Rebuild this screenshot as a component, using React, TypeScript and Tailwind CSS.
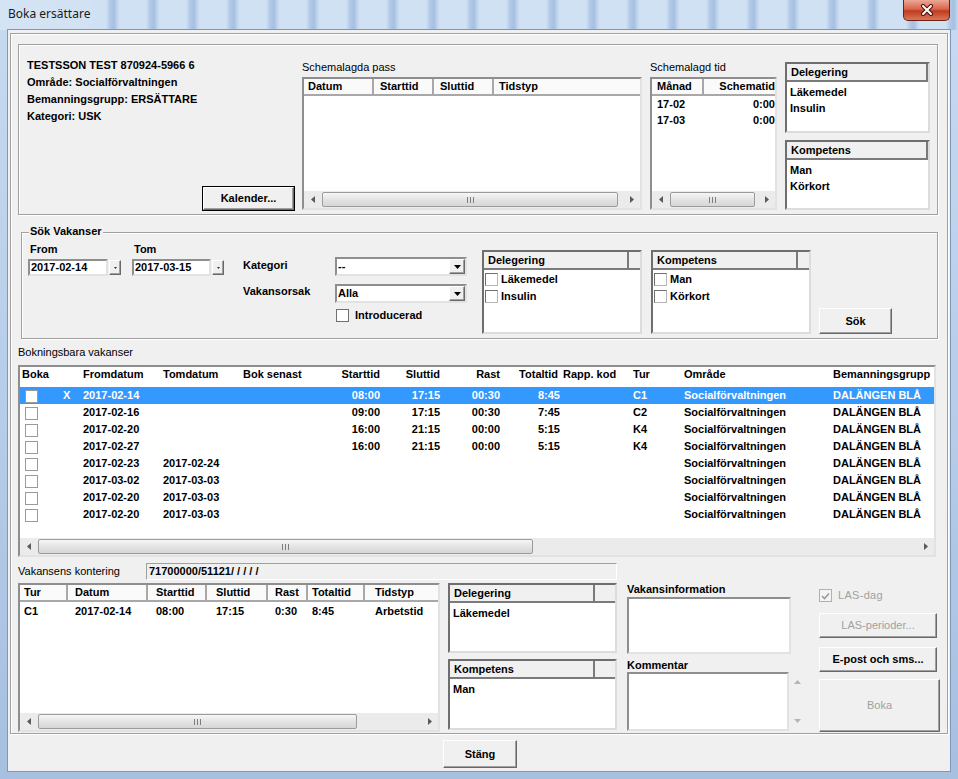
import React from 'react';

const sunken =
  'border-2 border-t-[#8e8e8e] border-l-[#8e8e8e] border-r-[#e2e2e2] border-b-[#e2e2e2]';
const etched = 'border border-[#a0a0a0] shadow-[inset_1px_1px_0_#fff,1px_1px_0_#fff]';
const raised =
  'bg-[#f0f0f0] border border-t-[#ffffff] border-l-[#ffffff] border-r-[#696969] border-b-[#696969] shadow-[inset_-1px_-1px_0_#a0a0a0]';

type Dir = 'left' | 'right' | 'up' | 'down';

function Arrow({ dir, color = '#5a5a5a' }: { dir: Dir; color?: string }) {
  const horiz = dir === 'left' || dir === 'right';
  const pts = {
    left: '4,0 4,7 0,3.5',
    right: '0,0 0,7 4,3.5',
    up: '0,4 7,4 3.5,0',
    down: '0,0 7,0 3.5,4',
  }[dir];
  return (
    <svg width={horiz ? 4 : 7} height={horiz ? 7 : 4} viewBox={horiz ? '0 0 4 7' : '0 0 7 4'}>
      <polygon points={pts} fill={color} />
    </svg>
  );
}

function Grip() {
  return (
    <div className="flex gap-[2px]">
      <span className="w-[1px] h-[6px] bg-[#7d7d7d]" />
      <span className="w-[1px] h-[6px] bg-[#7d7d7d]" />
      <span className="w-[1px] h-[6px] bg-[#7d7d7d]" />
    </div>
  );
}

function HScroll({ thumb }: { thumb: string }) {
  return (
    <div className="h-[17px] flex bg-[#ebebeb] shrink-0">
      <div className="w-[17px] flex items-center justify-center">
        <Arrow dir="left" />
      </div>
      <div className="flex-1 flex">
        <div
          className={`${thumb} my-[1px] rounded-[2px] border border-[#9b9b9b] bg-[linear-gradient(to_bottom,#f6f6f6,#e4e4e4_50%,#d6d6d6)] flex items-center justify-center`}
        >
          <Grip />
        </div>
      </div>
      <div className="w-[17px] flex items-center justify-center">
        <Arrow dir="right" />
      </div>
    </div>
  );
}

function Check({ className = '' }: { className?: string }) {
  return <span className={`block w-[13px] h-[13px] border border-[#9a9a9a] bg-white ${className}`} />;
}

function SearchCheck() {
  return (
    <span className="block w-[13px] h-[13px] border border-[#6f6f6f] border-r-[#b5b5b5] border-b-[#b5b5b5] bg-white" />
  );
}

function HeaderedList({
  title,
  cell,
  items,
  checks = false,
  className,
}: {
  title: string;
  cell: string;
  items: string[];
  checks?: boolean;
  className: string;
}) {
  return (
    <div
      className={`${className} border-2 border-t-[#6e6e6e] border-l-[#6e6e6e] border-r-[#dcdcdc] border-b-[#dcdcdc] bg-white flex flex-col overflow-hidden`}
    >
      <div className="h-[18px] shrink-0 flex bg-[#f0f0f0] border-b-2 border-[#7a7a7a]">
        <div className={`${cell} border-r-2 border-[#7a7a7a] pl-[4px] leading-[16px] whitespace-nowrap`}>
          {title}
        </div>
      </div>
      <div className={checks ? 'pt-[1px]' : 'pt-[2px]'}>
        {items.map((it) =>
          checks ? (
            <div key={it} className="h-[17px] flex items-center pl-[1px]">
              <SearchCheck />
              <span className="ml-[3px] leading-[17px]">{it}</span>
            </div>
          ) : (
            <div key={it} className="pl-[3px] leading-[16px]">
              {it}
            </div>
          )
        )}
      </div>
    </div>
  );
}

function ClassicButton({
  label,
  className,
  disabled = false,
  isDefault = false,
}: {
  label: string;
  className: string;
  disabled?: boolean;
  isDefault?: boolean;
}) {
  const inner = (
    <div
      className={`${raised} w-full h-full flex items-center justify-center ${
        disabled ? 'text-[#a0a0a0] font-normal' : 'text-black'
      }`}
    >
      {label}
    </div>
  );
  return isDefault ? (
    <div className={`${className} border border-black`}>{inner}</div>
  ) : (
    <div className={className}>{inner}</div>
  );
}

function TitleBar() {
  return (
    <div className="h-[30px] shrink-0 flex bg-[linear-gradient(90deg,#d5e4f4_0,#d2e2f3_90px,transparent_96px),repeating-linear-gradient(90deg,#d0e1f3_0,#d0e1f3_26px,#b2c9e5_30px,#a6bfe0_34px,#c6d9ef_38px,#d0e1f3_40px)]">
      <div className="pl-[8px] pt-[6px] text-[12px] leading-[16px] font-normal font-['Noto_Sans',sans-serif] text-[#1a1a1a]">
        Boka ersättare
      </div>
      <div className="ml-auto mr-[8px] w-[47px] h-[21px] rounded-b-[5px] border border-t-0 border-[#6b2013] bg-[linear-gradient(to_bottom,#eaa896,#d8664b_45%,#c13a20_55%,#d77758)] flex items-center justify-center">
        <svg width="14" height="12" viewBox="0 0 14 12">
          <path d="M3 2 L11 10 M11 2 L3 10" stroke="#4a1208" strokeWidth="4" strokeLinecap="round" />
          <path d="M3 2 L11 10 M11 2 L3 10" stroke="#ffffff" strokeWidth="2" strokeLinecap="round" />
        </svg>
      </div>
    </div>
  );
}

function TopGroup() {
  return (
    <div className={`ml-[7px] mt-[10px] w-[920px] h-[171px] shrink-0 ${etched} flex items-start`}>
      <div className="ml-[8px] mt-[12px] w-[275px] flex flex-col">
        <div className="leading-[17px]">TESTSSON TEST 870924-5966 6</div>
        <div className="leading-[17px]">Område: Socialförvaltningen</div>
        <div className="leading-[17px]">Bemanningsgrupp: ERSÄTTARE</div>
        <div className="leading-[17px]">Kategori: USK</div>
        <ClassicButton label="Kalender..." isDefault className="mt-[61px] ml-[175px] w-[93px] h-[25px]" />
      </div>

      <div className="mt-[15px] w-[340px] flex flex-col">
        <div className="leading-[15px] font-normal">Schemalagda pass</div>
        <div className={`mt-[2px] h-[133px] ${sunken} bg-white flex flex-col`}>
          <div className="h-[17px] flex bg-[#fafafa] border-b-2 border-[#a8a8a8] leading-[15px]">
            <div className="w-[70px] pl-[4px] border-r-2 border-[#a8a8a8]">Datum</div>
            <div className="w-[60px] pl-[6px] border-r-2 border-[#a8a8a8]">Starttid</div>
            <div className="w-[60px] pl-[6px] border-r-2 border-[#a8a8a8]">Sluttid</div>
            <div className="flex-1 pl-[5px]">Tidstyp</div>
          </div>
          <div className="flex-1" />
          <HScroll thumb="ml-[1px] w-[296px]" />
        </div>
      </div>

      <div className="ml-[8px] mt-[15px] w-[127px] flex flex-col">
        <div className="leading-[15px] font-normal">Schemalagd tid</div>
        <div className={`mt-[2px] h-[133px] ${sunken} bg-white flex flex-col overflow-hidden`}>
          <div className="h-[17px] flex bg-[#fafafa] border-b-2 border-[#a8a8a8] leading-[15px] whitespace-nowrap">
            <div className="w-[52px] shrink-0 pl-[5px] border-r-2 border-[#a8a8a8]">Månad</div>
            <div className="flex-1 text-right">Schematid</div>
          </div>
          <div className="flex-1">
            {['17-02', '17-03'].map((m) => (
              <div key={m} className="flex leading-[16px]">
                <div className="w-[52px] pl-[5px]">{m}</div>
                <div className="flex-1 text-right">0:00</div>
              </div>
            ))}
          </div>
          <HScroll thumb="ml-[1px] w-[85px]" />
        </div>
      </div>

      <div className="ml-[8px] mt-[17px] w-[145px] flex flex-col">
        <HeaderedList title="Delegering" cell="w-full" items={['Läkemedel', 'Insulin']} className="h-[71px]" />
        <HeaderedList title="Kompetens" cell="w-full" items={['Man', 'Körkort']} className="mt-[7px] h-[70px]" />
      </div>
    </div>
  );
}

function DateField({ value, w }: { value: string; w: string }) {
  return (
    <div className="flex items-start">
      <div className={`${w} h-[17px] ${sunken} bg-white pl-[1px] leading-[13px]`}>{value}</div>
      <div className={`ml-[1px] mt-[1px] w-[12px] h-[15px] ${raised} flex items-center justify-center`}>
        <svg width="3" height="2" viewBox="0 0 3 2">
          <polygon points="0,0 3,0 1.5,2" fill="#333" />
        </svg>
      </div>
    </div>
  );
}

function Select({ value, className }: { value: string; className: string }) {
  return (
    <div className={`${className} h-[19px] w-[132px] ${sunken} bg-white flex`}>
      <div className="flex-1 pl-[1px] leading-[15px]">{value}</div>
      <div className={`w-[16px] h-[15px] ${raised} flex items-center justify-center`}>
        <Arrow dir="down" color="#000" />
      </div>
    </div>
  );
}

function SearchGroup() {
  return (
    <div className={`ml-[10px] mt-[17px] w-[917px] h-[107px] shrink-0 ${etched} flex flex-col`}>
      <div className="-mt-[9px] ml-[7px] px-[1px] w-fit bg-[#f0f0f0] leading-[14px]">Sök Vakanser</div>
      <div className="flex items-start">
        <div className="ml-[6px] w-[104px] flex flex-col">
          <div className="mt-[4px] pl-[2px] leading-[14px]">From</div>
          <div className="mt-[3px]">
            <DateField value="2017-02-14" w="w-[80px]" />
          </div>
        </div>
        <div className="w-[111px] flex flex-col">
          <div className="mt-[4px] pl-[2px] leading-[14px]">Tom</div>
          <div className="mt-[3px]">
            <DateField value="2017-03-15" w="w-[79px]" />
          </div>
        </div>
        <div className="w-[92px] flex flex-col">
          <div className="mt-[20px] leading-[14px]">Kategori</div>
          <div className="mt-[12px] leading-[14px]">Vakansorsak</div>
        </div>
        <div className="w-[132px] flex flex-col">
          <Select value="--" className="mt-[19px]" />
          <Select value="Alla" className="mt-[8px]" />
          <div className="mt-[6px] flex items-center">
            <span className="ml-[1px] block w-[13px] h-[13px] border border-[#707070] bg-white" />
            <span className="ml-[6px] leading-[13px]">Introducerad</span>
          </div>
        </div>
        <HeaderedList
          title="Delegering"
          cell="w-[145px]"
          items={['Läkemedel', 'Insulin']}
          checks
          className="ml-[15px] mt-[12px] w-[160px] h-[84px]"
        />
        <HeaderedList
          title="Kompetens"
          cell="w-[145px]"
          items={['Man', 'Körkort']}
          checks
          className="ml-[9px] mt-[12px] w-[160px] h-[84px]"
        />
        <ClassicButton label="Sök" className="ml-[8px] mt-[70px] w-[73px] h-[26px]" />
      </div>
    </div>
  );
}

const vCols = [
  'w-[40px] pl-[5px]',
  'w-[20px] pl-[3px]',
  'w-[80px] pl-[3px]',
  'w-[80px] pl-[3px]',
  'w-[80px] pl-[3px]',
  'w-[60px] text-right',
  'w-[60px] text-right',
  'w-[60px] text-right',
  'w-[60px] text-right',
  'w-[70px] pl-[3px]',
  'w-[51px] pl-[3px]',
  'w-[149px] pl-[3px]',
  'w-[104px] pl-[3px]',
];

const vHeaders = [
  'Boka',
  '',
  'Fromdatum',
  'Tomdatum',
  'Bok senast',
  'Starttid',
  'Sluttid',
  'Rast',
  'Totaltid',
  'Rapp. kod',
  'Tur',
  'Område',
  'Bemanningsgrupp',
];

const vacancies = [
  { sel: true, x: 'X', from: '2017-02-14', tom: '', st: '08:00', sl: '17:15', rast: '00:30', tot: '8:45', tur: 'C1' },
  { from: '2017-02-16', tom: '', st: '09:00', sl: '17:15', rast: '00:30', tot: '7:45', tur: 'C2' },
  { from: '2017-02-20', tom: '', st: '16:00', sl: '21:15', rast: '00:00', tot: '5:15', tur: 'K4' },
  { from: '2017-02-27', tom: '', st: '16:00', sl: '21:15', rast: '00:00', tot: '5:15', tur: 'K4' },
  { from: '2017-02-23', tom: '2017-02-24' },
  { from: '2017-03-02', tom: '2017-03-03' },
  { from: '2017-02-20', tom: '2017-03-03' },
  { from: '2017-02-20', tom: '2017-03-03' },
];

function VacancyTable() {
  return (
    <div className={`ml-[7px] mt-[6px] w-[918px] h-[192px] shrink-0 ${sunken} bg-white flex flex-col overflow-hidden`}>
      <div className="h-[20px] shrink-0 flex leading-[14px] whitespace-nowrap">
        {vHeaders.map((h, i) => (
          <div key={i} className={`${vCols[i]} shrink-0 ${i === 0 ? '!pl-[2px]' : ''} ${i === 8 ? 'pr-[2px]' : ''}`}>
            {h}
          </div>
        ))}
      </div>
      <div className="flex-1">
        {vacancies.map((r, i) => {
          const cells = [
            '',
            r.x ?? '',
            r.from,
            r.tom,
            '',
            r.st ?? '',
            r.sl ?? '',
            r.rast ?? '',
            r.tot ?? '',
            '',
            r.tur ?? '',
            'Socialförvaltningen',
            'DALÄNGEN BLÅ',
          ];
          return (
            <div
              key={i}
              className={`h-[17px] flex items-center whitespace-nowrap ${r.sel ? 'bg-[#3399ff] text-white' : ''}`}
            >
              {cells.map((c, j) => (
                <div key={j} className={`${vCols[j]} shrink-0 leading-[17px]`}>
                  {j === 0 ? <Check className="mt-[2px]" /> : c}
                </div>
              ))}
            </div>
          );
        })}
      </div>
      <HScroll thumb="ml-[1px] w-[495px]" />
    </div>
  );
}

const bCols = [
  'w-[48px] pl-[4px]',
  'w-[80px] pl-[7px]',
  'w-[59px] pl-[8px]',
  'w-[61px] pl-[9px]',
  'w-[40px] pl-[7px]',
  'w-[57px] pl-[4px]',
  'flex-1 pl-[10px]',
];

function BottomTable() {
  const head = ['Tur', 'Datum', 'Starttid', 'Sluttid', 'Rast', 'Totaltid', 'Tidstyp'];
  const row = ['C1', '2017-02-14', '08:00', '17:15', '0:30', '8:45', 'Arbetstid'];
  return (
    <div className={`ml-[7px] w-[422px] h-[149px] ${sunken} bg-white flex flex-col`}>
      <div className="h-[17px] shrink-0 flex bg-[#fafafa] border-b-2 border-[#a8a8a8] leading-[15px]">
        {head.map((h, i) => (
          <div key={h} className={`${bCols[i]} ${i < 6 ? 'border-r-2 border-[#a8a8a8]' : ''}`}>
            {h}
          </div>
        ))}
      </div>
      <div className="flex-1">
        <div className="flex leading-[16px] mt-[1px]">
          {row.map((c, i) => (
            <div key={i} className={bCols[i]}>
              {c}
            </div>
          ))}
        </div>
      </div>
      <HScroll thumb="ml-[1px] w-[319px]" />
    </div>
  );
}

export default function App() {
  return (
    <div className="w-[958px] h-[779px] overflow-hidden flex flex-col font-['Liberation_Sans',Arial,sans-serif] text-[11px] font-bold text-black bg-[linear-gradient(to_bottom,#c8daf0,#a7c0e0)]">
      <TitleBar />
      <div className="mx-[8px] w-[942px] h-[741px] shrink-0 bg-[#f0f0f0] shadow-[0_0_0_1px_#7f98ba] flex flex-col">
        <div className={`ml-[2px] mt-[3px] w-[938px] h-[701px] shrink-0 ${etched} flex flex-col`}>
          <TopGroup />
          <SearchGroup />

          <div className="ml-[7px] mt-[6px] leading-[14px] font-normal">Bokningsbara vakanser</div>
          <VacancyTable />

          <div className="mt-[6px] h-[17px] flex items-center shrink-0">
            <div className="ml-[7px] w-[128px] leading-[17px] font-normal">Vakansens kontering</div>
            <div className="w-[471px] h-[17px] border border-t-[#a0a0a0] border-l-[#a0a0a0] border-r-[#ffffff] border-b-[#ffffff] bg-[#f0f0f0] pl-[2px] leading-[15px]">
              71700000/51121/ / / / /
            </div>
          </div>

          <div className="mt-[3px] flex items-start">
            <BottomTable />
            <div className="ml-[8px] w-[169px] flex flex-col">
              <HeaderedList title="Delegering" cell="w-[145px]" items={['Läkemedel']} className="h-[70px]" />
              <HeaderedList title="Kompetens" cell="w-[145px]" items={['Man']} className="mt-[6px] h-[71px]" />
            </div>
            <div className="ml-[10px] w-[176px] flex flex-col">
              <div className="-mt-[1px] leading-[14px]">Vakansinformation</div>
              <div className={`mt-[1px] w-[164px] h-[57px] ${sunken} bg-white`} />
              <div className="mt-[4px] leading-[14px]">Kommentar</div>
              <div className="flex">
                <div className={`w-[162px] h-[59px] ${sunken} bg-white`} />
                <div className="ml-[4px] w-[9px] h-[59px] flex flex-col items-center justify-between py-[8px]">
                  <Arrow dir="up" color="#b4b4b4" />
                  <Arrow dir="down" color="#b4b4b4" />
                </div>
              </div>
            </div>
            <div className="ml-[16px] w-[121px] flex flex-col">
              <div className="mt-[6px] flex items-center">
                <span className="w-[13px] h-[13px] border border-[#b0b0b0] bg-[#f4f4f4] flex items-center justify-center">
                  <svg width="9" height="8" viewBox="0 0 9 8">
                    <path d="M1 4 L3.5 6.5 L8 1.5" stroke="#9a9a9a" strokeWidth="1.6" fill="none" />
                  </svg>
                </span>
                <span className="ml-[6px] leading-[13px] font-normal text-[#a0a0a0] tracking-[0.3px]">LAS-dag</span>
              </div>
              <ClassicButton label="LAS-perioder..." disabled className="mt-[11px] w-[118px] h-[25px]" />
              <ClassicButton label="E-post och sms..." className="mt-[9px] w-[118px] h-[25px]" />
              <ClassicButton label="Boka" disabled className="mt-[7px] w-[121px] h-[53px]" />
            </div>
          </div>
        </div>
        <ClassicButton label="Stäng" className="ml-[435px] mt-[6px] w-[74px] h-[28px]" />
      </div>
    </div>
  );
}
